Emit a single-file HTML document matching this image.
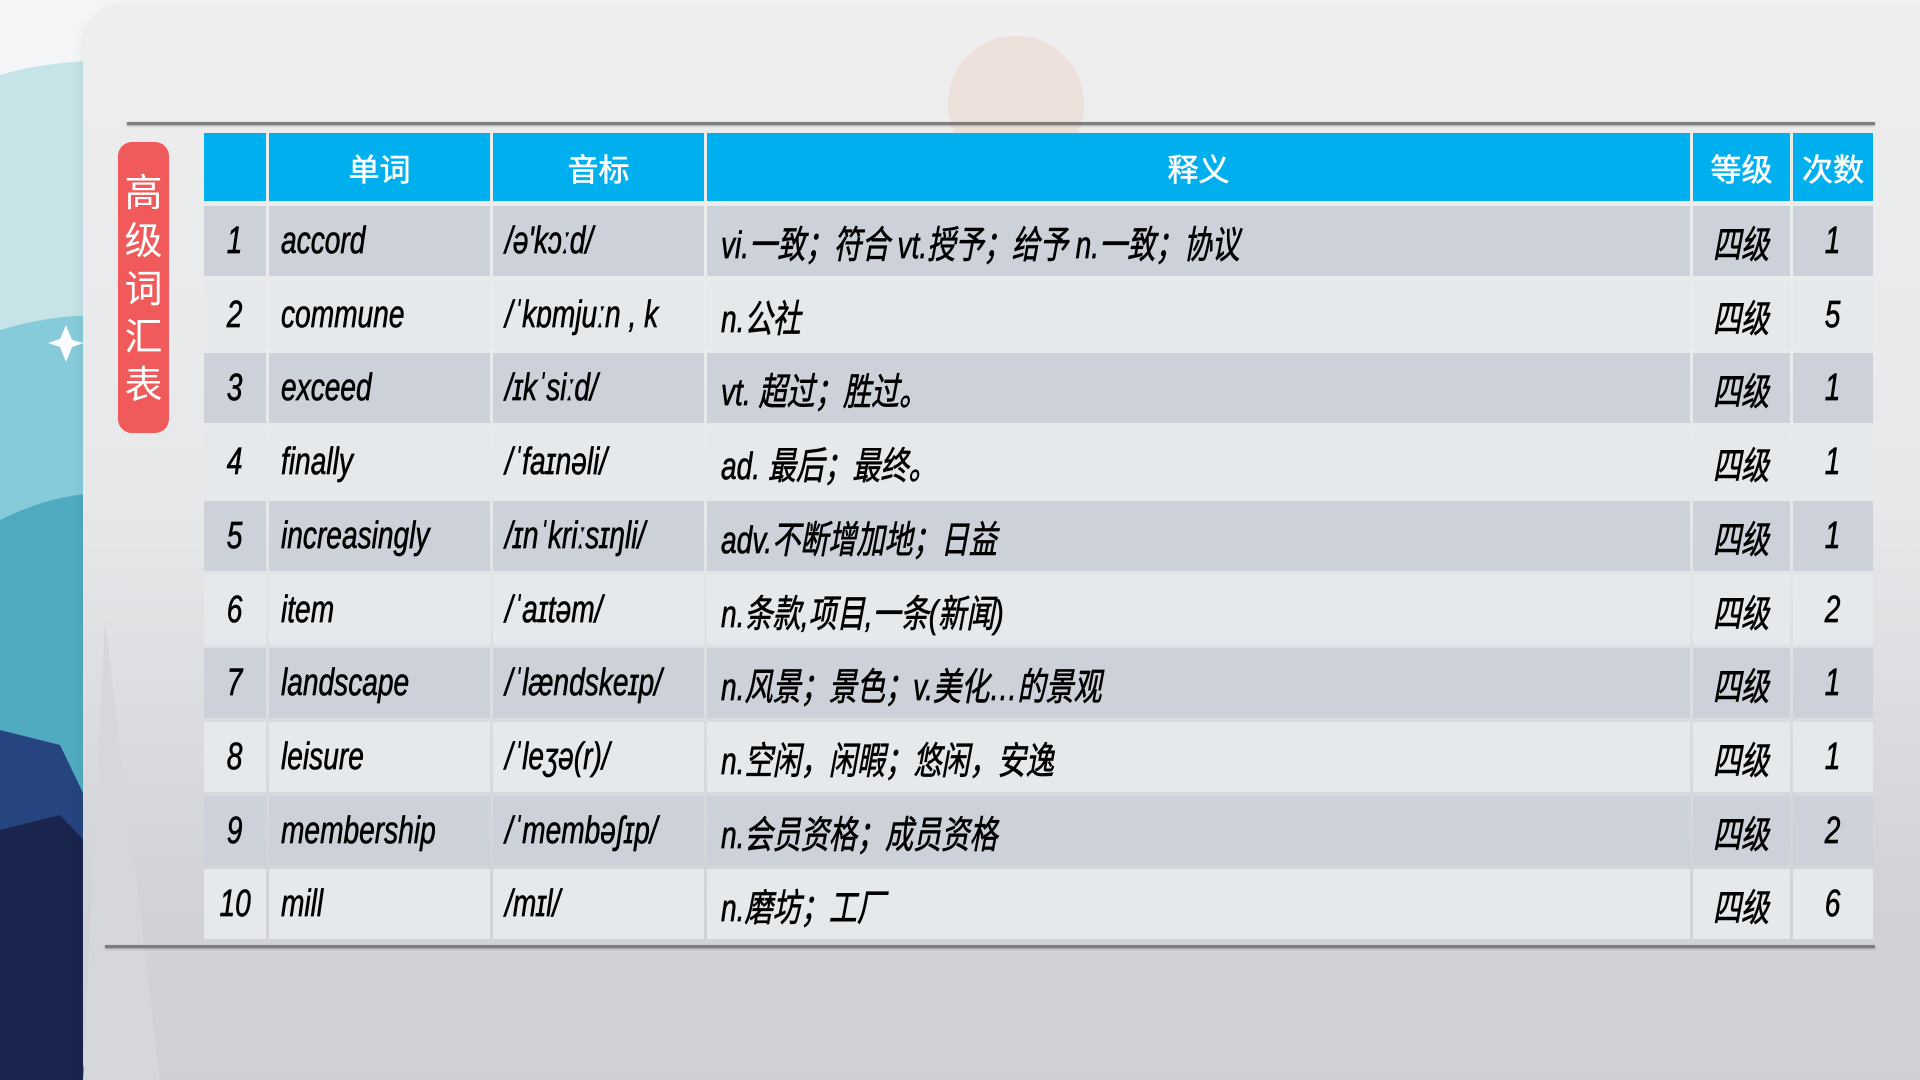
<!DOCTYPE html>
<html><head><meta charset="utf-8"><style>
html,body{margin:0;padding:0;width:1920px;height:1080px;overflow:hidden}
body{position:relative;background:#f4f5f6;font-family:"Liberation Sans","Noto Sans CJK SC",sans-serif}
.panel{position:absolute;left:83px;top:6px;width:1880px;height:1100px;border-radius:44px;background:linear-gradient(#eeeeee,#e6e8ea 45%,#d2d3d7 80%,#cfd0d4);box-shadow:0 0 12px rgba(0,0,0,.08)}
.line{position:absolute;height:3px;background:#7d7d7d;box-shadow:0 1px 2px rgba(0,0,0,.3)}
.c{position:absolute;box-sizing:border-box;display:flex;align-items:center;font-size:38px;font-style:italic;color:#000;white-space:nowrap;overflow:visible;-webkit-text-stroke:0.7px #000}
.c span{display:inline-block;transform:scaleX(.74);transform-origin:left center}
.ctr{justify-content:center}
.ctr span{transform-origin:center}
.h{background:#00b0ee;color:#fff;font-style:normal;justify-content:center;font-size:31px;font-family:"Noto Sans CJK SC",sans-serif;-webkit-text-stroke:0.6px #fff}
.lbl{position:absolute;left:118px;top:142px;width:51px;height:291px;border-radius:14px;background:#f05a5a;color:#fff;font-family:"Noto Sans CJK SC",sans-serif;font-size:38px;line-height:48px;text-align:center;padding-top:24px;box-sizing:border-box}
</style></head><body>
<svg width="1920" height="1080" style="position:absolute;left:0;top:0">
<path d="M0 75 Q120 40 300 90 L300 1080 L0 1080Z" fill="#c6e3e8"/>
<path d="M0 330 Q100 300 200 330 L200 1080 L0 1080Z" fill="#86cbd9"/>
<path d="M0 520 Q80 480 150 500 L150 1080 L0 1080Z" fill="#50abc0"/>
<path d="M0 730 L60 745 L120 870 L120 1080 L0 1080Z" fill="#26447f"/>
<path d="M0 830 L60 815 L140 900 L140 1080 L0 1080Z" fill="#19244f"/>
<path d="M66 325 L72 340 L84 343 L72 347 L66 362 L60 347 L48 343 L60 339Z" fill="#fff"/>
</svg>
<div class="panel"></div>
<svg width="1920" height="1080" style="position:absolute;left:0;top:0">
<circle cx="1016" cy="104" r="68" fill="#ecdcd4" opacity=".8"/>
<path d="M83 1080 L105 620 L160 1080Z" fill="#d6d7db"/>
</svg>
<div class="line" style="left:127px;top:122px;width:1748px"></div>
<div class="line" style="left:105px;top:945px;width:1770px"></div>
<div class="lbl">高<br>级<br>词<br>汇<br>表</div>
<div id="t"></div>
<script>
var data=[["1","accord","/ə'kɔːd/","vi.一致；符合 vt.授予；给予 n.一致；协议","1"],
["2","commune","/ˈkɒmjuːn , k","n.公社","5"],
["3","exceed","/ɪkˈsiːd/","vt. 超过；胜过。","1"],
["4","finally","/ˈfaɪnəli/","ad. 最后；最终。","1"],
["5","increasingly","/ɪnˈkriːsɪŋli/","adv.不断增加地；日益","1"],
["6","item","/ˈaɪtəm/","n.条款,项目,一条(新闻)","2"],
["7","landscape","/ˈlændskeɪp/","n.风景；景色；v.美化…的景观","1"],
["8","leisure","/ˈleʒə(r)/","n.空闲，闲暇；悠闲，安逸","1"],
["9","membership","/ˈmembəʃɪp/","n.会员资格；成员资格","2"],
["10","mill","/mɪl/","n.磨坊；工厂","6"]];
var E=[204,266,490,704,1690,1790,1873];
var h='';
function cell(x1,x2,y,hh,cls,txt,pad,bg){h+='<div class="c '+cls+'" style="left:'+x1+'px;top:'+y+'px;width:'+(x2-x1)+'px;height:'+hh+'px;'+(pad?'padding-left:'+pad+'px;':'')+(bg?'background:'+bg+';':'')+'">'+txt+'</div>';}
var hd=["","单词","音标","释义","等级","次数"];
for(var i=0;i<6;i++){cell(E[i]+(i?3:0),E[i+1],133,68,'h',hd[i]);}
for(var r=0;r<10;r++){var y=Math.round(206+r*73.7);var bg=r%2?'#e5e9ec':'#cdd1d9';var d=data[r];
 var t=[d[0],d[1],d[2],d[3],'四级',d[4]];
 for(var i=0;i<6;i++){var cls=(i==0||i>=4)?'ctr':'';
  cell(E[i]+(i?3:0),E[i+1],y,70,cls,'<span>'+t[i]+'</span>',(i>=1&&i<=3)?(i==3?14:12):0,bg);}
}
document.getElementById('t').innerHTML=h;
</script>
</body></html>
